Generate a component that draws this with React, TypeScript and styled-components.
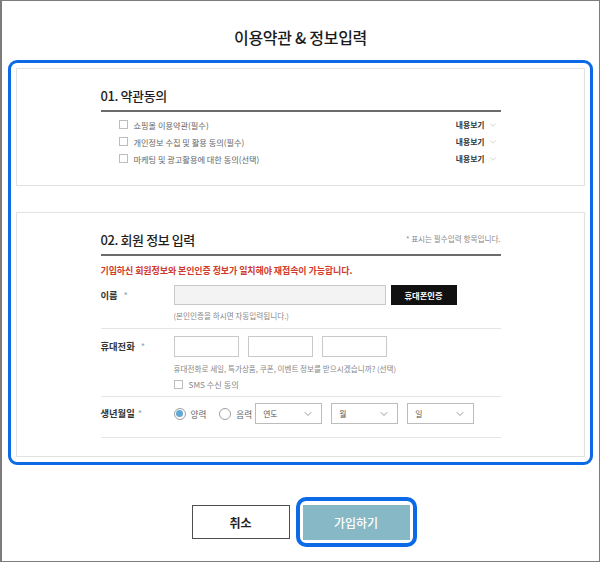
import React from 'react';
import styled, { createGlobalStyle } from 'styled-components';
import { ChevronDown } from 'lucide-react';

const GlobalStyle = createGlobalStyle`
  body {
    margin: 0;
    background: #fff;
    font-family: 'Noto Sans CJK KR', 'Noto Sans', sans-serif;
    color: #222;
  }
`;

const Frame = styled.div`
  width: 600px;
  height: 562px;
  box-sizing: border-box;
  border: 1px solid #7c7c7c;
  border-left-width: 2px;
  background: #fff;
  overflow: hidden;
`;

const Title = styled.h1`
  margin: 0 0 11px;
  padding-top: 24px;
  font-size: 16px;
  line-height: 24px;
  font-weight: 500;
  text-align: center;
  color: #1b1b1b;
  letter-spacing: -0.3px;
`;

const Highlight = styled.div`
  margin-left: 6px;
  width: 585px;
  box-sizing: border-box;
  border: 3px solid #0d6ae6;
  border-radius: 9px;
  padding: 5px;
  display: flex;
  flex-direction: column;
  gap: 26px;
`;

const Panel = styled.section`
  border: 1px solid #e2e2e2;
  background: #fff;
  padding: 17px 0 18px;
`;

const Inner = styled.div`
  width: 400px;
  margin: 0 auto;
`;

const SectionHead = styled.div`
  display: flex;
  align-items: center;
  justify-content: space-between;
  padding-bottom: 4px;
  border-bottom: 2px solid #6b6b6b;
`;

const SectionTitle = styled.h2`
  margin: 0;
  font-size: 13px;
  line-height: 20px;
  font-weight: 500;
  letter-spacing: -0.4px;
  color: #1e1e1e;
`;

const Note = styled.span`
  font-size: 7.6px;
  color: #888;
  margin-top: -4px;
`;

const TermList = styled.ul`
  list-style: none;
  margin: 4px 0 0;
  padding: 0 3px 0 18px;
`;

const TermRow = styled.li`
  display: flex;
  align-items: center;
  justify-content: space-between;
  height: 17px;
`;

const CheckLabel = styled.label<{ $muted?: boolean }>`
  display: flex;
  align-items: center;
  gap: 6px;
  font-size: 8.2px;
  color: ${(p) => (p.$muted ? '#888' : '#666')};
`;

const Box = styled.span`
  width: 9px;
  height: 9px;
  box-sizing: border-box;
  border: 1px solid #bdbdbd;
  background: #fff;
`;

const More = styled.span`
  display: flex;
  align-items: center;
  gap: 3px;
  font-size: 7.8px;
  font-weight: 700;
  color: #333;
`;

const Warning = styled.p`
  margin: 8px 0 0;
  font-size: 9px;
  line-height: 14px;
  font-weight: 700;
  letter-spacing: -0.1px;
  color: #d13a2b;
`;

const Field = styled.div<{ $bottom?: number; $top?: number }>`
  display: grid;
  grid-template-columns: 73px 1fr;
  padding: ${(p) => p.$top ?? 6}px 0 ${(p) => p.$bottom ?? 6}px;
  border-bottom: 1px solid #e4e4e4;
`;

const Label = styled.div<{ $lh?: number }>`
  font-size: 9.3px;
  line-height: ${(p) => p.$lh ?? 21}px;
  font-weight: 700;
  color: #333;
  white-space: nowrap;
`;

const Star = styled.span<{ $gap?: number }>`
  margin-left: ${(p) => p.$gap ?? 6}px;
  color: #8fa9b8;
  font-weight: 400;
`;

const Line = styled.div`
  display: flex;
  align-items: center;
`;

const TextInput = styled.div<{ $w: number; $h?: number; $gray?: boolean }>`
  width: ${(p) => p.$w}px;
  height: ${(p) => p.$h ?? 21}px;
  box-sizing: border-box;
  border: 1px solid #c9c9c9;
  background: ${(p) => (p.$gray ? '#f3f3f3' : '#fff')};
`;

const AuthButton = styled.button`
  margin-left: 5px;
  width: 66px;
  height: 20px;
  border: none;
  background: #111;
  color: #fff;
  font-family: inherit;
  font-size: 8.3px;
  font-weight: 700;
  padding: 0;
`;

const PhoneInputs = styled.div`
  display: flex;
  gap: 9px;
`;

const Help = styled.div<{ $top: number }>`
  margin-top: ${(p) => p.$top}px;
  font-size: 7.6px;
  line-height: 12px;
  color: #888;
`;

const Radio = styled.label`
  display: flex;
  align-items: center;
  gap: 5px;
  font-size: 8.6px;
  color: #666;
  margin-right: 13px;
  &:last-of-type {
    margin-right: 3px;
  }
`;

const Dot = styled.span<{ $on?: boolean }>`
  width: 12px;
  height: 12px;
  box-sizing: border-box;
  border-radius: 50%;
  border: 1px solid #a0a0a0;
  display: flex;
  align-items: center;
  justify-content: center;
  &::after {
    content: '';
    width: 7px;
    height: 7px;
    border-radius: 50%;
    background: ${(p) => (p.$on ? '#62a8d2' : 'transparent')};
  }
`;

const Selects = styled.div`
  display: flex;
  gap: 9px;
`;

const Select = styled.div`
  width: 67px;
  height: 21px;
  box-sizing: border-box;
  border: 1px solid #bcbcbc;
  display: flex;
  align-items: center;
  justify-content: space-between;
  padding: 0 7px;
  font-size: 7.8px;
  color: #555;
`;

const Buttons = styled.div`
  margin-top: 40px;
  display: flex;
  justify-content: center;
  gap: 13px;
`;

const CancelButton = styled.button`
  width: 98px;
  height: 34px;
  box-sizing: border-box;
  border: 1px solid #4d4d4d;
  background: #fff;
  color: #222;
  font-family: inherit;
  font-size: 12px;
  font-weight: 700;
`;

const JoinButton = styled.button`
  position: relative;
  width: 107px;
  height: 35px;
  border: none;
  background: #86b8c6;
  color: #fff;
  font-family: inherit;
  font-size: 12px;
  font-weight: 500;
  &::after {
    content: '';
    position: absolute;
    inset: -8px -7px -7px -7px;
    border: 4px solid #0d6ae6;
    border-radius: 10px;
  }
`;

const terms = [
  '쇼핑몰 이용약관(필수)',
  '개인정보 수집 및 활용 동의(필수)',
  '마케팅 및 광고활용에 대한 동의(선택)',
];

export default function App() {
  return (
    <>
      <GlobalStyle />
      <Frame>
        <Title>이용약관 &amp; 정보입력</Title>
        <Highlight>
          <Panel>
            <Inner>
              <SectionHead>
                <SectionTitle>01. 약관동의</SectionTitle>
              </SectionHead>
              <TermList>
                {terms.map((t) => (
                  <TermRow key={t}>
                    <CheckLabel>
                      <Box />
                      {t}
                    </CheckLabel>
                    <More>
                      내용보기
                      <ChevronDown size={10} color="#b5b5b5" strokeWidth={1.4} />
                    </More>
                  </TermRow>
                ))}
              </TermList>
            </Inner>
          </Panel>
          <Panel>
            <Inner>
              <SectionHead>
                <SectionTitle>02. 회원 정보 입력</SectionTitle>
                <Note>* 표시는 필수입력 항목입니다.</Note>
              </SectionHead>
              <Warning>기입하신 회원정보와 본인인증 정보가 일치해야 재접속이 가능합니다.</Warning>
              <Field $top={7}>
                <Label $lh={20}>
                  이름<Star>*</Star>
                </Label>
                <div>
                  <Line>
                    <TextInput $w={212} $h={20} $gray />
                    <AuthButton>휴대폰인증</AuthButton>
                  </Line>
                  <Help $top={5}>(본인인증을 하시면 자동입력됩니다.)</Help>
                </div>
              </Field>
              <Field $top={7}>
                <Label>
                  휴대전화<Star>*</Star>
                </Label>
                <div>
                  <PhoneInputs>
                    <TextInput $w={65} />
                    <TextInput $w={65} />
                    <TextInput $w={65} />
                  </PhoneInputs>
                  <Help $top={6}>휴대전화로 세일, 특가상품, 쿠폰, 이벤트 정보를 받으시겠습니까? (선택)</Help>
                  <Help $top={3}>
                    <CheckLabel $muted>
                      <Box />
                      SMS 수신 동의
                    </CheckLabel>
                  </Help>
                </div>
              </Field>
              <Field $bottom={13}>
                <Label>
                  생년월일<Star $gap={3}>*</Star>
                </Label>
                <Line>
                  <Radio>
                    <Dot $on />
                    양력
                  </Radio>
                  <Radio>
                    <Dot />
                    음력
                  </Radio>
                  <Selects>
                    {['연도', '월', '일'].map((s) => (
                      <Select key={s}>
                        {s}
                        <ChevronDown size={12} color="#666" strokeWidth={1.3} />
                      </Select>
                    ))}
                  </Selects>
                </Line>
              </Field>
            </Inner>
          </Panel>
        </Highlight>
        <Buttons>
          <CancelButton>취소</CancelButton>
          <JoinButton>가입하기</JoinButton>
        </Buttons>
      </Frame>
    </>
  );
}
